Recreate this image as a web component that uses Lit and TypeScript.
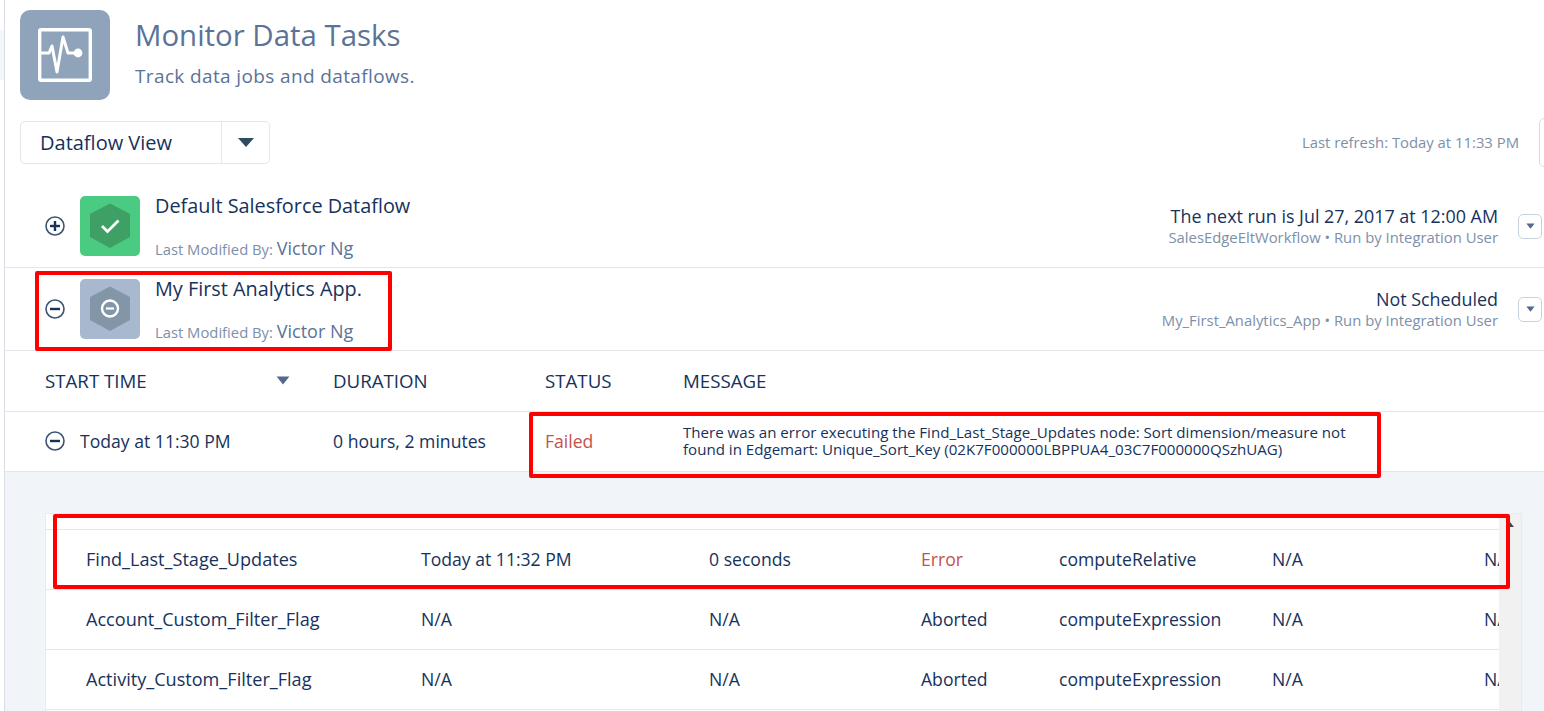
import { LitElement, html, css, svg } from "lit";
import { customElement } from "lit/decorators.js";

const circleIcon = (plus: boolean) => html`<svg class="toggle" viewBox="0 0 20 20" width="20" height="20">
  <circle cx="10" cy="10" r="9" fill="none" stroke="#3d5472" stroke-width="1.6"></circle>
  <rect x="5" y="8.8" width="10" height="2.4" fill="#16325c"></rect>
  ${plus ? svg`<rect x="8.8" y="5" width="2.4" height="10" fill="#16325c"></rect>` : ""}
</svg>`;

const caret = (w: number, h: number) => html`<svg viewBox="0 0 12 8" width="${w}" height="${h}" preserveAspectRatio="none"><path d="M0.5 0.5h11L6 7.5z" fill="#54698d"></path></svg>`;

const hexIcon = (ok: boolean) => html`<div class="status ${ok ? "ok" : "off"}">
  <svg viewBox="0 0 60 60" width="60" height="60">
    <path d="M30 7.5 L50 18 V41 L30 52 L10 41 V18 Z" fill="${ok ? "#3ea065" : "#8396a8"}"></path>
    ${ok
      ? svg`<path d="M22 30 L27.5 35.5 L38.5 24.5" fill="none" stroke="#fff" stroke-width="2.8"></path>`
      : svg`<circle cx="30" cy="29.5" r="8" fill="none" stroke="#fff" stroke-width="2.4"></circle><rect x="26" y="28.4" width="8" height="2.2" fill="#fff"></rect>`}
  </svg>
</div>`;

const nodes = [
  ["Find_Last_Stage_Updates", "Today at 11:32 PM", "0 seconds", "Error", "computeRelative", "N/A", "N/A"],
  ["Account_Custom_Filter_Flag", "N/A", "N/A", "Aborted", "computeExpression", "N/A", "N/A"],
  ["Activity_Custom_Filter_Flag", "N/A", "N/A", "Aborted", "computeExpression", "N/A", "N/A"],
];

@customElement("app-root")
export class AppRoot extends LitElement {
  static styles = css`
    :host {
      display: block;
      height: 711px;
      overflow: hidden;
      position: relative;
      font-family: "Open Sans", "Noto Sans", sans-serif;
      color: #16325c;
      background: #fff;
    }
    * { box-sizing: border-box; }
    .strip { position: absolute; left: 0; top: 30px; width: 4px; height: 50px; background: #f3f5fa; }
    .page { margin-left: 4px; border-left: 1px solid #d8dde6; height: 711px; overflow: hidden; }
    .head { display: flex; gap: 25px; padding: 10px 0 0 15px; height: 111px; }
    .logo { width: 90px; height: 90px; border-radius: 10px; background: #8fa4bb; display: flex; align-items: center; justify-content: center; }
    .title { font-size: 29.4px; line-height: 36px; margin-top: 7px; color: #5a7397; }
    .sub { font-size: 19px; letter-spacing: 0.37px; line-height: 24px; margin-top: 11px; color: #5a7397; }
    .toolbar { display: flex; align-items: center; height: 74px; padding: 10px 0 21px 15px; }
    .picker { display: flex; width: 250px; height: 43px; border: 1px solid #e4e6ea; border-radius: 5px; }
    .picker .name { flex: 1; padding-left: 19px; font-size: 20px; line-height: 41px; color: #16325c; border-right: 1px solid #e4e6ea; }
    .picker .drop { width: 47px; display: flex; align-items: center; justify-content: center; }
    .refresh { margin-left: auto; margin-bottom: 2px; font-size: 14.85px; color: #7d8fa9; }
    .stub { width: 20px; height: 49px; margin-left: 20px; margin-right: -15px; border: 1px solid #d8dde6; border-radius: 5px; }
    .flow { display: flex; align-items: center; height: 83px; padding-left: 40px; border-bottom: 1px solid #e4e6ea; position: relative; }
    .toggle { flex: none; display: block; }
    .status { width: 60px; height: 60px; border-radius: 5px; margin-left: 15px; flex: none; }
    .status.ok { background: #4bca81; }
    .status.off { background: #a8b9cf; }
    .status svg { display: block; }
    .info { margin-left: 15px; height: 69px; display: flex; flex-direction: column; justify-content: space-between; }
    .flow-name { font-size: 19.85px; line-height: 28px; color: #16325c; }
    .mod { font-size: 14.8px; line-height: 24px; color: #7d8fa9; }
    .mod b { font-weight: 400; font-size: 18px; color: #5a7397; }
    .right { margin-left: auto; text-align: right; padding-bottom: 2px; }
    .next { font-size: 17.9px; line-height: 24px; color: #16325c; }
    .by { font-size: 14.85px; line-height: 19px; color: #7d8fa9; }
    .menu { width: 24px; height: 25px; margin: 0 2px 0 20px; border: 1px solid #c7d2e0; border-radius: 5px; display: flex; align-items: center; justify-content: center; flex: none; }
    .cols { display: grid; grid-template-columns: 288px 212px 138px 1fr; padding-left: 40px; }
    .ths { height: 61px; padding-bottom: 2px; align-items: center; border-bottom: 1px solid #e4e6ea; font-size: 18.7px; color: #16325c; }
    .th-first { display: flex; align-items: center; justify-content: space-between; padding-right: 43px; }
    .run { height: 60px; padding-bottom: 2px; align-items: center; border-bottom: 1px solid #e4e6ea; font-size: 17.6px; }
    .run-first { display: flex; align-items: center; gap: 15px; }
    .failed { color: #c4514c; }
    .msg { font-size: 15.1px; line-height: 17px; width: 680px; }
    .detail { background: #f1f4f9; height: 240px; padding: 41px 22px 0 40px; }
    .table { background: #fff; display: flex; border: 1px solid #e8eaee; border-bottom: 0; height: 199px; }
    .tbody { flex: 1; overflow: hidden; min-width: 0; }
    .thead { height: 16px; border-bottom: 1px solid #e4e6ea; }
    .node { display: grid; grid-template-columns: 335px 288px 212px 138px 213px 212px 100px; height: 60px; padding-bottom: 2px; align-items: center; padding-left: 40px; border-bottom: 1px solid #e4e6ea; font-size: 17.6px; white-space: nowrap; }
    .node div:first-child { font-size: 18.1px; }
    .node .err { color: #c4514c; }
    .scroll { width: 22px; background: #f1f1f1; position: relative; flex: none; }
    .scroll i { position: absolute; left: 7px; top: 8px; border: 4px solid transparent; border-top: 0; border-bottom: 5px solid #444; }
    .mark { position: absolute; border: 4px solid #f00; border-radius: 2px; pointer-events: none; }
    .m1 { left: 35px; top: 271px; width: 357px; height: 80px; }
    .m2 { left: 529px; top: 412px; width: 852px; height: 66px; }
    .m3 { left: 53px; top: 514px; width: 1457px; height: 75px; }
  `;

  render() {
    return html`
      <div class="strip"></div>
      <div class="page">
        <div class="head">
          <div class="logo">
            <svg viewBox="0 0 54 54" width="54" height="54">
              <rect x="1.7" y="1.7" width="50.6" height="50.6" rx="1.5" fill="none" stroke="#fff" stroke-width="3.4"></rect>
              <path d="M3 25 H11 L14 18 L19 44 L25 9 L30 25 H40" fill="none" stroke="#fff" stroke-width="3" stroke-linejoin="round" stroke-linecap="round"></path>
              <circle cx="40" cy="25" r="4.4" fill="#fff"></circle>
            </svg>
          </div>
          <div>
            <div class="title">Monitor Data Tasks</div>
            <div class="sub">Track data jobs and dataflows.</div>
          </div>
        </div>
        <div class="toolbar">
          <div class="picker">
            <div class="name">Dataflow View</div>
            <div class="drop"><svg viewBox="0 0 16 9" width="16" height="9"><path d="M0 0h16L8 9z" fill="#304a5e"></path></svg></div>
          </div>
          <div class="refresh">Last refresh: Today at 11:33 PM</div>
          <div class="stub"></div>
        </div>
        <div class="flow">
          ${circleIcon(true)}${hexIcon(true)}
          <div class="info">
            <div class="flow-name">Default Salesforce Dataflow</div>
            <div class="mod">Last Modified By: <b>Victor Ng</b></div>
          </div>
          <div class="right">
            <div class="next">The next run is Jul 27, 2017 at 12:00 AM</div>
            <div class="by">SalesEdgeEltWorkflow • Run by Integration User</div>
          </div>
          <div class="menu">${caret(9, 6)}</div>
        </div>
        <div class="flow">
          ${circleIcon(false)}${hexIcon(false)}
          <div class="info">
            <div class="flow-name">My First Analytics App.</div>
            <div class="mod">Last Modified By: <b>Victor Ng</b></div>
          </div>
          <div class="right">
            <div class="next">Not Scheduled</div>
            <div class="by">My_First_Analytics_App • Run by Integration User</div>
          </div>
          <div class="menu">${caret(9, 6)}</div>
        </div>
        <div class="cols ths">
          <div class="th-first"><span>START TIME</span>${caret(14, 9)}</div>
          <div>DURATION</div>
          <div>STATUS</div>
          <div>MESSAGE</div>
        </div>
        <div class="cols run">
          <div class="run-first">${circleIcon(false)}<span>Today at 11:30 PM</span></div>
          <div>0 hours, 2 minutes</div>
          <div class="failed">Failed</div>
          <div class="msg">There was an error executing the Find_Last_Stage_Updates node: Sort dimension/measure not found in Edgemart: Unique_Sort_Key (02K7F000000LBPPUA4_03C7F000000QSzhUAG)</div>
        </div>
        <div class="detail">
          <div class="table">
            <div class="tbody">
              <div class="thead"></div>
              ${nodes.map((n) => html`<div class="node">
                ${n.map((c) => html`<div class="${c === "Error" ? "err" : ""}">${c}</div>`)}
              </div>`)}
            </div>
            <div class="scroll"><i></i></div>
          </div>
        </div>
      </div>
      <div class="mark m1"></div>
      <div class="mark m2"></div>
      <div class="mark m3"></div>
    `;
  }
}
